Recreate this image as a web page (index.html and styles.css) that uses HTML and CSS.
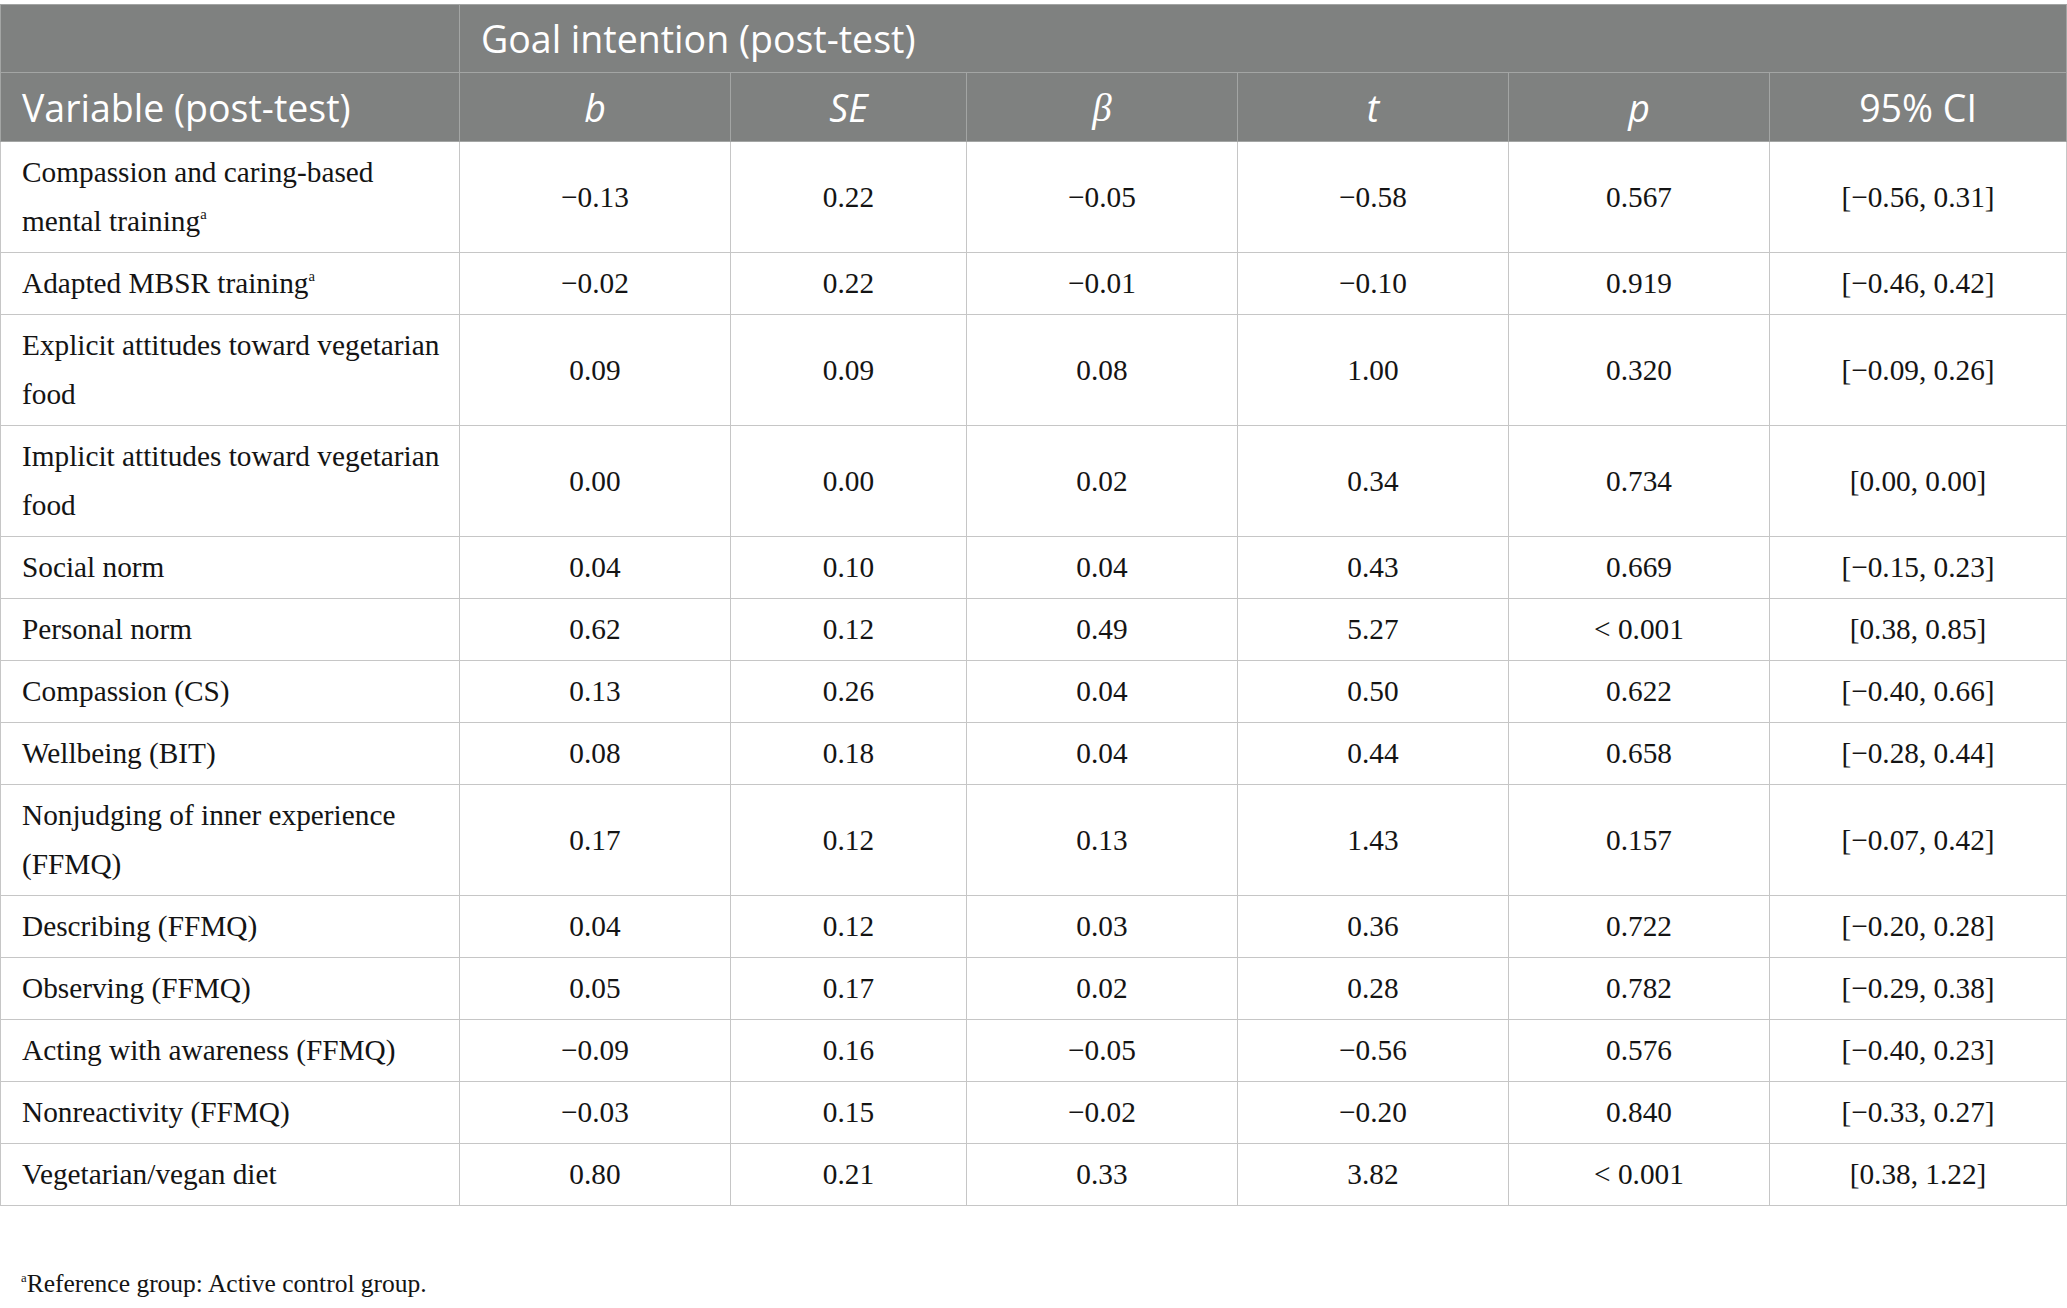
FILE: index.html
```html
<!DOCTYPE html>
<html lang="en">

<head>
  <meta charset="UTF-8">
  <title>Goal intention table</title>
  <link rel="stylesheet" href="styles.css">
</head>

<body>
  <table class="stats">
    <colgroup>
      <col class="c-var">
      <col class="c-b">
      <col class="c-se">
      <col class="c-beta">
      <col class="c-t">
      <col class="c-p">
      <col class="c-ci">
    </colgroup>
    <thead>
      <tr class="head-top">
        <th></th>
        <th colspan="6" class="left">Goal intention (post-test)</th>
      </tr>
      <tr class="head-cols">
        <th class="left">Variable (post-test)</th>
        <th><i>b</i></th>
        <th><i>SE</i></th>
        <th><i class="greek">β</i></th>
        <th><i>t</i></th>
        <th><i>p</i></th>
        <th>95% CI</th>
      </tr>
    </thead>
    <tbody>
      <tr>
        <td class="left">Compassion and caring-based<br>mental training<sup>a</sup></td>
        <td>−0.13</td><td>0.22</td><td>−0.05</td><td>−0.58</td><td>0.567</td><td>[−0.56, 0.31]</td>
      </tr>
      <tr>
        <td class="left">Adapted MBSR training<sup>a</sup></td>
        <td>−0.02</td><td>0.22</td><td>−0.01</td><td>−0.10</td><td>0.919</td><td>[−0.46, 0.42]</td>
      </tr>
      <tr>
        <td class="left">Explicit attitudes toward vegetarian<br>food</td>
        <td>0.09</td><td>0.09</td><td>0.08</td><td>1.00</td><td>0.320</td><td>[−0.09, 0.26]</td>
      </tr>
      <tr>
        <td class="left">Implicit attitudes toward vegetarian<br>food</td>
        <td>0.00</td><td>0.00</td><td>0.02</td><td>0.34</td><td>0.734</td><td>[0.00, 0.00]</td>
      </tr>
      <tr>
        <td class="left">Social norm</td>
        <td>0.04</td><td>0.10</td><td>0.04</td><td>0.43</td><td>0.669</td><td>[−0.15, 0.23]</td>
      </tr>
      <tr>
        <td class="left">Personal norm</td>
        <td>0.62</td><td>0.12</td><td>0.49</td><td>5.27</td><td>&lt; 0.001</td><td>[0.38, 0.85]</td>
      </tr>
      <tr>
        <td class="left">Compassion (CS)</td>
        <td>0.13</td><td>0.26</td><td>0.04</td><td>0.50</td><td>0.622</td><td>[−0.40, 0.66]</td>
      </tr>
      <tr>
        <td class="left">Wellbeing (BIT)</td>
        <td>0.08</td><td>0.18</td><td>0.04</td><td>0.44</td><td>0.658</td><td>[−0.28, 0.44]</td>
      </tr>
      <tr>
        <td class="left">Nonjudging of inner experience<br>(FFMQ)</td>
        <td>0.17</td><td>0.12</td><td>0.13</td><td>1.43</td><td>0.157</td><td>[−0.07, 0.42]</td>
      </tr>
      <tr>
        <td class="left">Describing (FFMQ)</td>
        <td>0.04</td><td>0.12</td><td>0.03</td><td>0.36</td><td>0.722</td><td>[−0.20, 0.28]</td>
      </tr>
      <tr>
        <td class="left">Observing (FFMQ)</td>
        <td>0.05</td><td>0.17</td><td>0.02</td><td>0.28</td><td>0.782</td><td>[−0.29, 0.38]</td>
      </tr>
      <tr>
        <td class="left">Acting with awareness (FFMQ)</td>
        <td>−0.09</td><td>0.16</td><td>−0.05</td><td>−0.56</td><td>0.576</td><td>[−0.40, 0.23]</td>
      </tr>
      <tr>
        <td class="left">Nonreactivity (FFMQ)</td>
        <td>−0.03</td><td>0.15</td><td>−0.02</td><td>−0.20</td><td>0.840</td><td>[−0.33, 0.27]</td>
      </tr>
      <tr>
        <td class="left">Vegetarian/vegan diet</td>
        <td>0.80</td><td>0.21</td><td>0.33</td><td>3.82</td><td>&lt; 0.001</td><td>[0.38, 1.22]</td>
      </tr>
    </tbody>
  </table>
  <p class="note"><sup>a</sup>Reference group: Active control group.</p>
</body>

</html>
```

FILE: styles.css
```css
body {
  margin: 0;
  padding-top: 4px;
  background: #fff;
  color: #141414;
  font-family: "Liberation Serif", "Times New Roman", serif;
}

.stats {
  width: 2066px;
  border-collapse: collapse;
  table-layout: fixed;
  font-size: 29.3px;
}

.c-var { width: 459px; }
.c-b { width: 271px; }
.c-se { width: 236px; }
.c-beta { width: 271px; }
.c-t { width: 271px; }
.c-p { width: 261px; }
.c-ci { width: 297px; }

.stats th {
  background: #7f8180;
  color: #fff;
  font-family: "Open Sans", "Noto Sans", sans-serif;
  font-weight: 400;
  font-size: 37.5px;
  line-height: 55px;
  padding: 6px 21px;
  border: 1px solid #a3a5a4;
  text-align: center;
}

.stats th.left,
.stats td.left {
  text-align: left;
}

.stats td.left {
  white-space: nowrap;
  padding-right: 4px;
}

.stats th i {
  font-style: italic;
}

.stats th .greek {
  font-family: "Liberation Serif", serif;
  font-size: 39px;
}

.stats td {
  border: 1px solid #c6c6c6;
  line-height: 49px;
  padding: 6px 21px;
  text-align: center;
  vertical-align: middle;
}

.stats sup,
.note sup {
  font-size: 0.5em;
  line-height: 0;
  vertical-align: 0.8em;
}

.note {
  margin: 61px 0 0;
  padding-left: 21px;
  font-size: 25.5px;
  line-height: 34px;
}
```
